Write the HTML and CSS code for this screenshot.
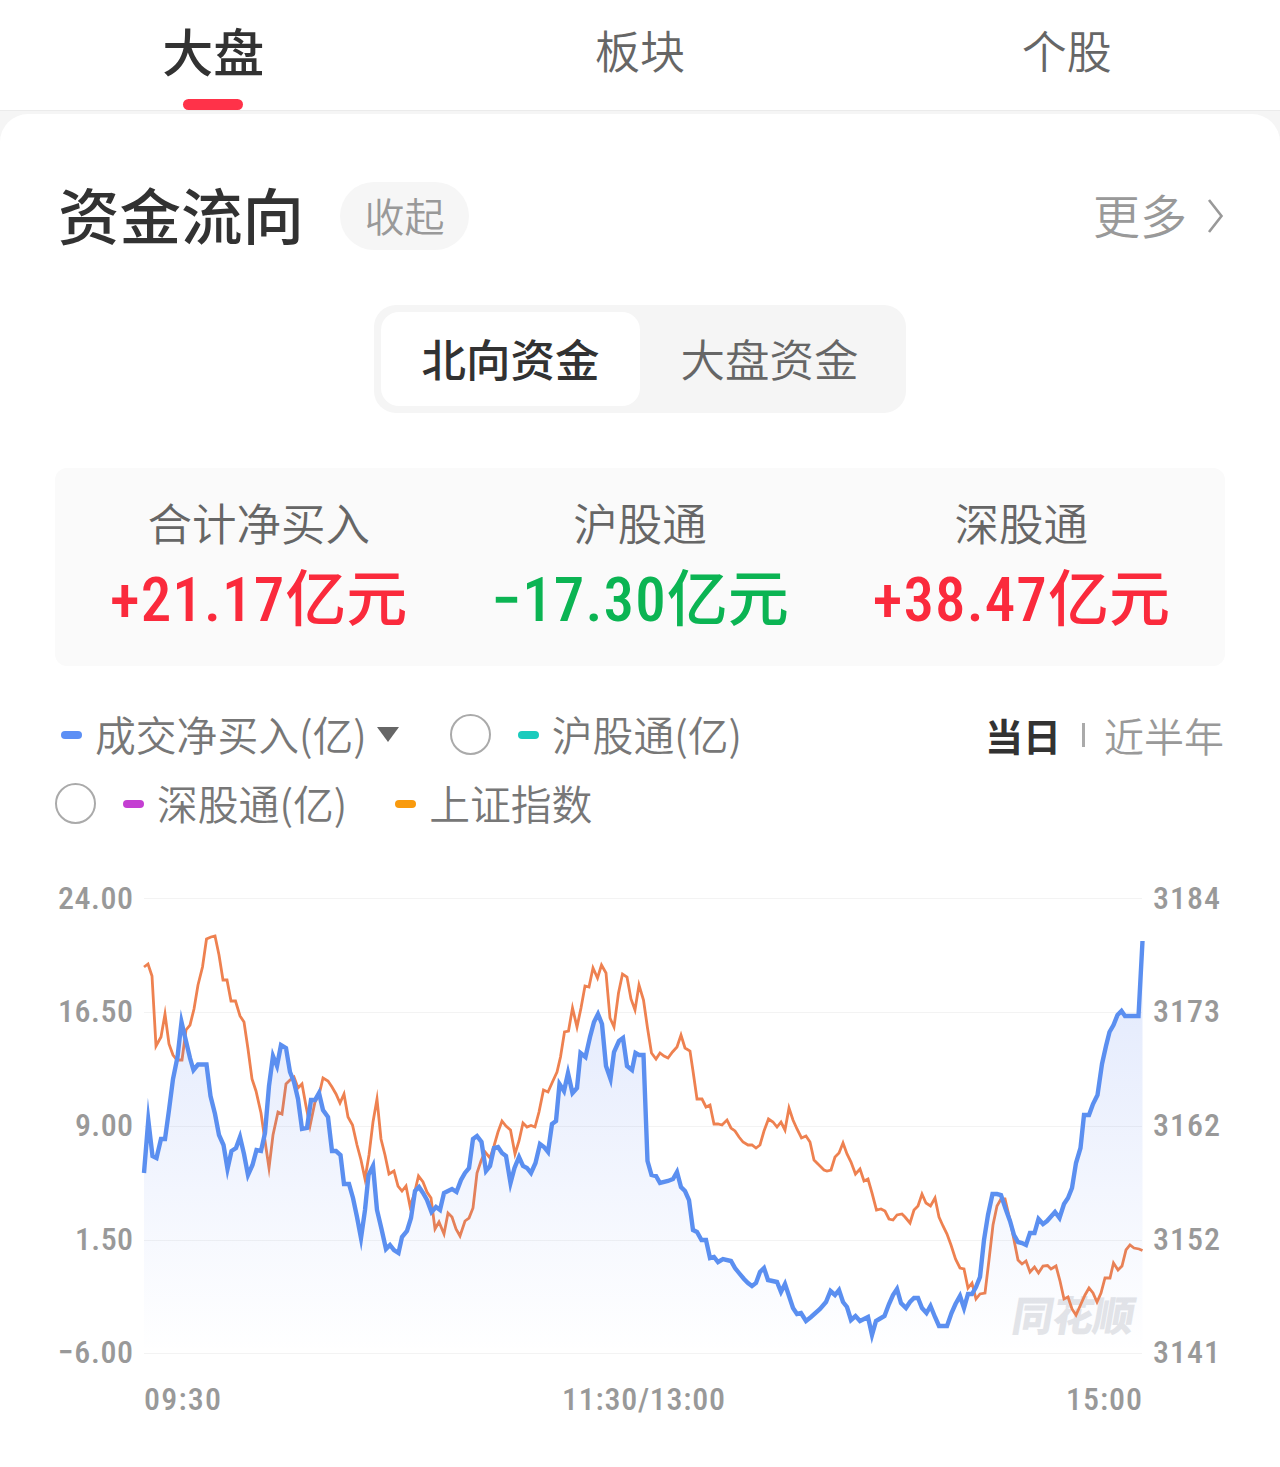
FILE: index.html
```html
<!DOCTYPE html>
<html lang="zh-CN">

<head>
    <meta charset="UTF-8">
    <meta name="viewport" content="width=device-width, initial-scale=1.0">
    <title>资金流向</title>
    <link rel="stylesheet" href="styles.css">
</head>

<body>
    <div class="tabs">
        <div class="tab active">大盘</div>
        <div class="tab">板块</div>
        <div class="tab">个股</div>
    </div>

    <div class="panel">
        <div class="header">
            <h1>资金流向</h1>
            <span class="fold">收起</span>
            <span class="more"><span>更多</span>
                <svg width="17" height="36" viewBox="0 0 17 36"><path d="M2 2L14.5 18L2 34" /></svg>
            </span>
        </div>

        <div class="switch">
            <div class="on">北向资金</div>
            <div>大盘资金</div>
        </div>

        <div class="stats">
            <div class="stat">
                <div class="label">合计净买入</div>
                <div class="value up"><span>+21.17</span>亿元</div>
            </div>
            <div class="stat">
                <div class="label">沪股通</div>
                <div class="value down"><span>−17.30</span>亿元</div>
            </div>
            <div class="stat">
                <div class="label">深股通</div>
                <div class="value up"><span>+38.47</span>亿元</div>
            </div>
        </div>

        <div class="legend">
            <div class="legendrow">
                <i class="mark blue"></i><span>成交净买入(亿)</span><i class="arrow"></i>
                <i class="radio second"></i><i class="mark teal"></i><span>沪股通(亿)</span>
                <div class="range"><b>当日</b><i></i><span>近半年</span></div>
            </div>
            <div class="legendrow">
                <i class="radio"></i><i class="mark purple"></i><span>深股通(亿)</span>
                <i class="mark orange"></i><span>上证指数</span>
            </div>
        </div>

        <svg class="chart" width="1280" height="587" viewBox="0 880 1280 587">
            <defs>
                <linearGradient id="fade" gradientUnits="userSpaceOnUse" x1="0" y1="941" x2="0" y2="1353">
                    <stop offset="0" stop-color="#4b78f0" stop-opacity="0.17" />
                    <stop offset="1" stop-color="#4b78f0" stop-opacity="0" />
                </linearGradient>
            </defs>
            <path class="grid" d="M144 898.5H1142M144 1012.5H1142M144 1126.5H1142M144 1240.5H1142M144 1353.5H1142" />

            <!-- left axis -->
            <g class="axis end">
                <text x="133" y="909" textLength="75">24.00</text>
                <text x="133" y="1022" textLength="75">16.50</text>
                <text x="133" y="1136" textLength="58">9.00</text>
                <text x="133" y="1250" textLength="58">1.50</text>
                <text x="133" y="1363" textLength="75">−6.00</text>
            </g>
            <!-- right axis -->
            <g class="axis">
                <text x="1153" y="909" textLength="67">3184</text>
                <text x="1153" y="1022" textLength="67">3173</text>
                <text x="1153" y="1136" textLength="67">3162</text>
                <text x="1153" y="1250" textLength="67">3152</text>
                <text x="1153" y="1363" textLength="67">3141</text>
            </g>
            <!-- time -->
            <g class="axis">
                <text x="144" y="1410" textLength="77">09:30</text>
                <text x="562" y="1410" textLength="163">11:30/13:00</text>
                <text x="1066" y="1410" textLength="76">15:00</text>
            </g>

            <text class="watermark" x="1245" y="1331" transform="skewX(-10)" textLength="122">同花顺</text>

            <polyline class="index" points="144,967 148,964 152,976 156,1046 161,1037 165,1014 169,1044 173,1055 177,1060 182,1060 186,1030 190,1025 194,1009 198,985 202.5,967 206.5,939 211,937 215,936 219,955 223,980 227,980 231,1001 235.5,1001 240,1016 244,1022 248,1049 252,1079 256,1091 261,1113 265,1141 269,1168 273,1135 278,1112 282,1114 286,1084 290,1080 294,1077 298,1088 302,1084 306,1106 310,1126 315,1102 319,1095 323,1078 328,1081 332,1087 336,1094 340,1103 344,1094 348,1117 352.5,1125 357,1145 361,1160 365,1179 369,1155 373,1122 377,1099 381,1139 385,1155 389,1174 394,1171 398,1186 402,1191 406,1186 410,1206 414,1195 418.5,1176 423,1182 427,1192 431,1198 435,1229 439,1222 444,1234 448,1213 452,1217 456,1229 460,1236 465,1221 469,1218 473,1208 477,1173 481,1161 485,1152 490,1158 494,1146 498,1132 502,1121 506,1126 510.5,1130 515,1154 519,1141 523,1123 527,1127 531,1125.5 535,1127 539,1112 543.5,1090 548,1092 552,1083 557,1072 560.5,1057 564.5,1032 568.5,1031 572.5,1008 577,1027 581,1008 585,986 589,987 593,968 597.5,978 601.5,965 606,973 610,1018 614,1027 618.5,993 622.5,974 627,977 631,999 635,1010 639,985 643.5,1000 647.5,1028 651.5,1053 656,1059 660,1053 664,1056 668,1058 672.5,1052 677,1047 681,1035 685,1048 690,1051 693,1071 697,1099 702,1099 706,1107 710,1105 714,1124 718,1124 722,1125 727,1120 731,1128 735,1131 739,1137 743,1142 748,1145 752,1145 756,1148 760,1145 764,1131 768.5,1119 773,1122 777,1127 781,1122 785,1130 789,1108 793,1120 797,1129 801.5,1138 806,1136 810,1142 814,1160 818,1164 824,1170 827,1171 831,1170 835,1157 839,1153 843,1143 847,1154 851,1162 855.5,1174 860,1169 864,1181 868,1179 872,1193 876.5,1210 881,1209 885,1211 889,1219 893,1220 897,1215 902,1214 905,1217 910,1223 914,1210 918,1206 922,1194 926,1203 930.5,1206 935,1198 939,1217 943,1226 947,1234 951,1245 955.5,1259 960,1268 964,1269 968,1288 972,1283 976,1299 980,1294 985,1293 989,1260 993,1225 997,1206 1001,1199 1005,1199 1010,1220 1014,1240 1018,1260 1022,1264 1026,1261 1030,1272 1034.5,1267 1038.5,1273 1043,1266 1047.5,1265.5 1051,1269 1056,1266 1060,1281 1064,1299 1068,1297 1072,1309 1076,1315 1080.5,1305 1085,1295 1089,1288 1093,1293 1097,1302 1101,1293 1105,1278 1110,1278 1113.5,1263 1118,1270 1122,1266 1126,1250 1130,1245 1134,1248 1139,1249 1142.5,1250.5" />
            <polygon id="area" fill="url(#fade)" />
            <polyline id="net" class="net" points="144,1173 148.3,1120 152.5,1156 156.5,1158 161,1139 165,1139 169,1110 173,1079 177.5,1057 181.5,1022 185.5,1039 190,1058 193.5,1070 198,1064.5 206.5,1064.5 210.5,1096 215,1114 219,1135 223.5,1145 227.5,1169 231.5,1151 236,1148 240,1137 244,1154 248,1175 252.5,1165 256.5,1150 261,1151 265,1133 269,1086 273,1056 277,1066 281,1045 286,1048 290,1072 294,1082 298,1099 302,1129 307,1128 311,1100 315,1100 319,1093 323,1110 328,1117 332,1151 336,1151 340.5,1155 344,1184 349,1184 353,1198 357,1217 361,1238 365,1210 368.5,1175 373,1166 377,1210 381.5,1229 386,1249 390,1245 394,1250 398.5,1253 402,1237 407,1231 411,1218 415,1191 419,1187 423,1193 427,1200 431.5,1212 436,1207 440,1210 444,1193 448,1191 452,1189 456.5,1192 461,1180 465,1173 469,1168 473,1139 477,1136 481.5,1142 486,1171 490,1166 494,1148 498,1147 502,1153 506,1156 510.5,1183 514.5,1168 519,1157 523,1166 527,1168 531,1173 535.5,1163 540,1144 544,1147 548,1152 552,1124 556,1121 559.5,1084 564,1091 568,1073 572.5,1093 577,1088 580.5,1053 585.5,1057 590,1037 594,1022 598,1014 602,1024 606,1066 610.5,1079 614,1052 619,1041 623,1038 627,1066 632,1070 635.5,1053 639,1055 643.5,1055 647.5,1161 651.5,1175 656,1176 660,1183 668,1181 673,1179 677,1172 681,1187 685,1191 689,1200 693,1230 697,1232 701.5,1240 706,1240 710,1258 714,1257 718,1262 723,1259 731,1261 735,1268 739,1273 744,1279 748,1283 752,1286 756,1283 760,1272 764,1268 768,1280 777,1282 781,1292 785,1284 789,1296 793,1308 797,1314 801,1313 806,1321 811,1317 820,1309 826,1302 830.5,1291 835,1295 839,1290 843,1302 847,1307 851,1320 855.5,1316 860,1321 868,1317 872,1335 876,1321 884.5,1316 889,1304 893,1295 897,1289 901,1303 906,1308 910,1302 914,1298 918,1298 922,1308 926.5,1313 930.5,1306 935,1317 939,1326 947,1326 951.5,1313 955.5,1304 960,1296 964,1308 968,1294 972,1294 976,1287 980,1277 984,1240 988,1215 992.5,1194 997,1194 1001,1195 1006,1210 1010,1221 1014,1235 1018,1242 1022,1243 1026,1245 1030,1233 1034.5,1233 1038.5,1219 1043,1224 1047,1221 1055,1212 1059.5,1218 1064,1204 1068,1198 1072,1188 1076,1163 1080.5,1148 1084,1115 1089,1115 1093,1104 1097.5,1095 1102,1064 1106,1046 1109.5,1032 1113.5,1025 1117.5,1015 1121.5,1011 1125,1016 1138.5,1016 1142.5,941" />
        </svg>
    </div>

    <script type="text/javascript">
        // close the net line down to the bottom of the chart
        var net = document.getElementById("net").getAttribute("points");
        document.getElementById("area").setAttribute("points", "144,1353 " + net + " 1142.5,1353");
    </script>
</body>

</html>
```
FILE: styles.css
```css
* {
    margin: 0;
    padding: 0;
    box-sizing: border-box;
}

body {
    background: #f5f5f5;
    font-family: "Noto Sans CJK SC", sans-serif;
    font-weight: 350;
    color: #323232;
}

i {
    display: block;
    flex: none;
}

.tabs {
    display: flex;
    height: 111px;
    padding-top: 1px;
    background: #fff;
    border-bottom: 1px solid #ebebeb;
}

.tab {
    flex: 1;
    display: flex;
    flex-direction: column;
    align-items: center;
    font-size: 45px;
    line-height: 98px;
    color: #666;
}

.tab.active {
    font-size: 51px;
    font-weight: 500;
    color: #323232;
}

.tab.active::after {
    content: "";
    width: 60px;
    height: 12px;
    border-radius: 6px;
    background: #ff3249;
}

.panel {
    height: 1353px;
    margin-top: 3px;
    padding-top: 68px;
    border-radius: 28px 28px 0 0;
    background: #fff;
}

.header {
    display: flex;
    align-items: center;
    height: 68px;
    padding: 0 56px 0 58px;
}

h1 {
    height: 68px;
    font-size: 61.5px;
    font-weight: 500;
    line-height: 64px;
}

.fold {
    width: 129px;
    height: 68px;
    margin-left: 36px;
    border-radius: 34px;
    background: #f6f6f6;
    font-size: 40px;
    line-height: 67px;
    text-align: center;
    color: #999;
}

.more {
    display: flex;
    align-items: center;
    gap: 20px;
    height: 68px;
    margin-left: auto;
    font-size: 47px;
    color: #999;
}

.more span {
    height: 68px;
    line-height: 64px;
}

.more path {
    fill: none;
    stroke: #999;
    stroke-width: 2.6;
}

.switch {
    display: flex;
    width: 532px;
    height: 108px;
    margin: 55px auto 0;
    padding: 7px;
    border-radius: 22px;
    background: #f5f5f5;
}

.switch div {
    flex: 1;
    border-radius: 18px;
    font-size: 44.5px;
    line-height: 92px;
    text-align: center;
    color: #666;
}

.switch .on {
    background: #fff;
    font-weight: 500;
    color: #323232;
}

.stats {
    display: flex;
    height: 198px;
    margin: 55px 55px 0;
    padding: 21px 13px 0;
    border-radius: 12px;
    background: #fafafa;
}

.stat {
    flex: 1;
    text-align: center;
    white-space: nowrap;
}

.label {
    font-size: 44.5px;
    line-height: 66px;
    color: #666;
}

.value {
    font-size: 61px;
    font-weight: 500;
    line-height: 79px;
}

.value span {
    font-family: Roboto, sans-serif;
    font-weight: 550;
    font-stretch: 82%;
    letter-spacing: 1.1px;
}

.up {
    color: #fa2a3c;
}

.down {
    color: #0bb453;
}

.legend {
    padding: 34px 56px 0 55px;
}

.legendrow {
    display: flex;
    align-items: center;
    height: 69px;
    font-size: 40.8px;
    line-height: 56px;
    color: #777;
}

.legendrow > span {
    height: 58px;
}

.mark {
    width: 21px;
    height: 8px;
    margin-right: 13px;
    border-radius: 4px;
}

.blue {
    margin-left: 6px;
    background: #5c8ff5;
}

.teal {
    margin-left: 27px;
    background: #1acbbd;
}

.purple {
    margin-left: 27px;
    background: #c43fd2;
}

.orange {
    margin-left: 48px;
    background: #f99a0d;
}

.arrow {
    margin-left: 10px;
    border: 11px solid transparent;
    border-top: 15px solid #666;
    border-bottom: 0;
}

.radio {
    width: 41px;
    height: 41px;
    border: 2px solid #aaa;
    border-radius: 50%;
}

.second {
    margin-left: 51px;
}

.range {
    display: flex;
    align-items: center;
    margin-left: auto;
    font-size: 40px;
    color: #999;
}

.range b {
    font-size: 38px;
    font-weight: 700;
    color: #323232;
}

.range i {
    width: 3px;
    height: 24px;
    margin: 0 19px 0 21px;
    background: #aaa;
}

.chart {
    display: block;
    margin-top: 42px;
}

.grid {
    stroke: #f3f3f3;
}

.axis {
    font-family: Roboto, sans-serif;
    font-size: 32px;
    font-weight: 500;
    font-stretch: 85%;
    fill: #999;
}

.end {
    text-anchor: end;
}

.watermark {
    font-size: 41px;
    font-weight: 900;
    fill: #e4e5e8;
}

.index {
    fill: none;
    stroke: #ee8150;
    stroke-width: 2.8;
    stroke-miterlimit: 10;
}

.net {
    fill: none;
    stroke: #5b8ff0;
    stroke-width: 4.4;
    stroke-miterlimit: 16;
}
```
